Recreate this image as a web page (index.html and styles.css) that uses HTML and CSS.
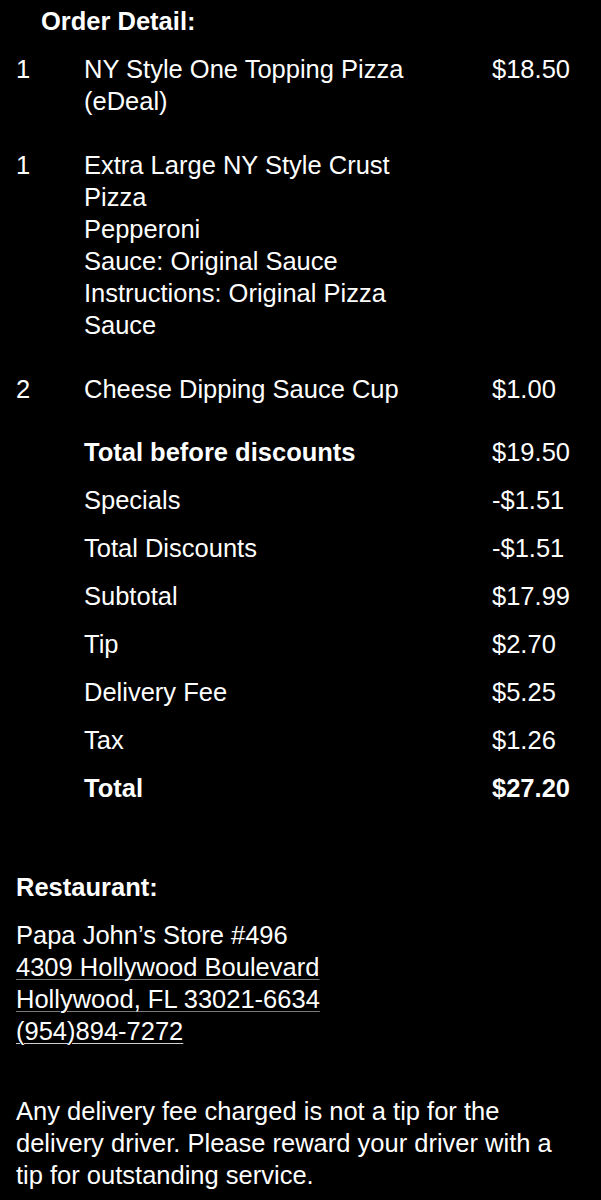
FILE: index.html
```html
<!DOCTYPE html>
<html lang="en">
<head>
    <meta charset="UTF-8">
    <meta name="viewport" content="width=device-width, initial-scale=1.0">
    <title>Order Detail</title>
    <link rel="stylesheet" href="styles.css">
</head>
<body>
    <div class="receipt">
        <h2 class="section-title order-title">Order Detail:</h2>

        <div class="items">
            <div class="qty">1</div>
            <div class="desc">NY Style One Topping Pizza (eDeal)</div>
            <div class="price">$18.50</div>

            <div class="qty">1</div>
            <div class="desc">
                <span class="line">Extra Large NY Style Crust Pizza</span>
                <span class="line">Pepperoni</span>
                <span class="line">Sauce: Original Sauce</span>
                <span class="line">Instructions: Original Pizza Sauce</span>
            </div>
            <div class="price"></div>

            <div class="qty">2</div>
            <div class="desc">Cheese Dipping Sauce Cup</div>
            <div class="price">$1.00</div>
        </div>

        <div class="totals">
            <div class="label strong">Total before discounts</div>
            <div class="amount">$19.50</div>
            <div class="label">Specials</div>
            <div class="amount">-$1.51</div>
            <div class="label">Total Discounts</div>
            <div class="amount">-$1.51</div>
            <div class="label">Subtotal</div>
            <div class="amount">$17.99</div>
            <div class="label">Tip</div>
            <div class="amount">$2.70</div>
            <div class="label">Delivery Fee</div>
            <div class="amount">$5.25</div>
            <div class="label">Tax</div>
            <div class="amount">$1.26</div>
            <div class="label strong">Total</div>
            <div class="amount strong">$27.20</div>
        </div>

        <h2 class="section-title restaurant-title">Restaurant:</h2>
        <p class="address">
            <span class="line">Papa John’s Store #496</span>
            <a class="line map-link" href="#">4309 Hollywood Boulevard</a>
            <a class="line map-link" href="#">Hollywood, FL 33021-6634</a>
            <a class="line phone-link" href="#">(954)894-7272</a>
        </p>

        <p class="notice">Any delivery fee charged is not a tip for the delivery driver. Please reward your driver with a tip for outstanding service.</p>
    </div>
</body>
</html>
```

FILE: styles.css
```css
body {
    margin: 0;
    background-color: #000000;
    color: #ffffff;
    font-family: 'Liberation Sans', Arial, Helvetica, sans-serif;
    font-size: 25.5px;
    line-height: 32px;
}

.receipt {
    padding: 5px 0 40px 16px;
}

.section-title {
    margin: 0;
    font-size: 25.5px;
    font-weight: bold;
    line-height: 32px;
}

.order-title {
    margin-left: 25px;
    margin-bottom: 16px;
}

/* qty | description | price */
.items,
.totals {
    display: grid;
    grid-template-columns: 68px 408px 1fr;
}

.items {
    row-gap: 32px;
}

.desc {
    padding-right: 63px;
}

.line {
    display: block;
}

.totals {
    margin-top: 31px;
    row-gap: 16px;
}

.totals .label {
    grid-column: 2;
}

.strong {
    font-weight: bold;
}

.restaurant-title {
    margin-top: 67px;
}

.address {
    margin: 16px 0 0;
}

.address a {
    color: #ffffff;
    text-decoration: underline;
    text-underline-offset: 3px;
    text-decoration-thickness: 1px;
}

.address a.line {
    display: table;
}

.map-link {
    text-decoration-color: #7a7a7a !important;
}

.phone-link {
    text-decoration-color: #cfcfcf !important;
}

.notice {
    margin: 48px 0 0;
    max-width: 548px;
}
```
